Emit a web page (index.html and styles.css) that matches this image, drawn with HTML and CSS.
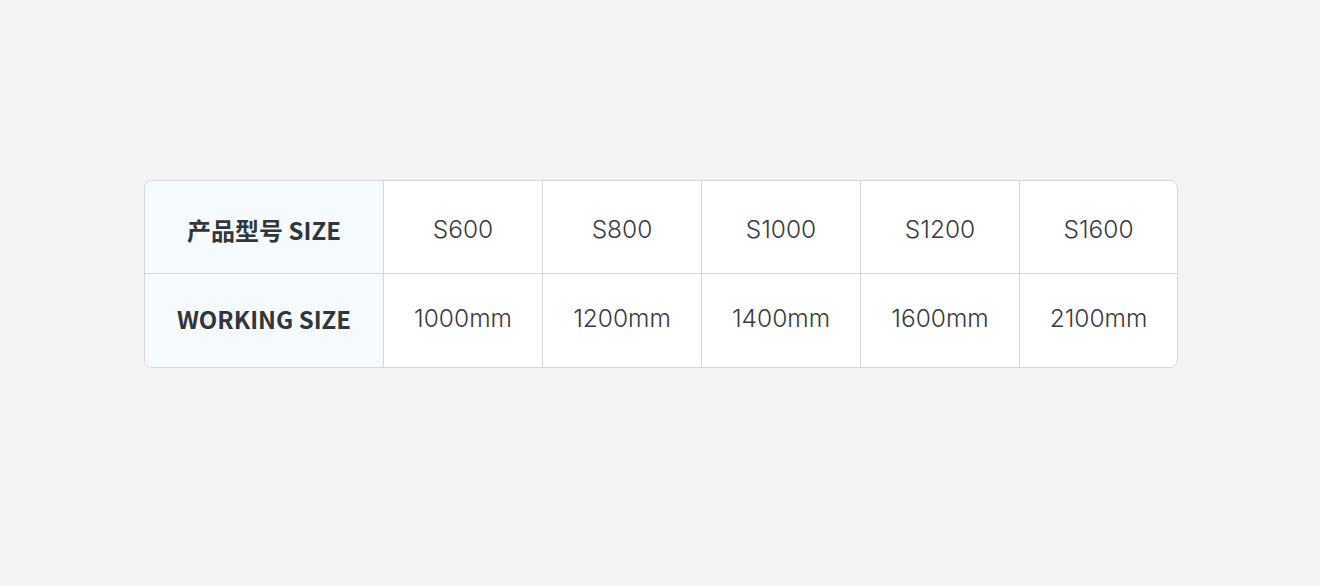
FILE: index.html
```html
<!DOCTYPE html>
<html lang="zh">
<head>
<meta charset="utf-8">
<link rel="stylesheet" href="styles.css">
</head>
<body>
<div class="page">
  <div class="spec">
    <div class="cell head top">产品型号 SIZE</div>
    <div class="cell top">S600</div>
    <div class="cell top">S800</div>
    <div class="cell top">S1000</div>
    <div class="cell top">S1200</div>
    <div class="cell top last">S1600</div>
    <div class="cell head bottom">WORKING SIZE</div>
    <div class="cell bottom">1000mm</div>
    <div class="cell bottom">1200mm</div>
    <div class="cell bottom">1400mm</div>
    <div class="cell bottom">1600mm</div>
    <div class="cell bottom last">2100mm</div>
  </div>
</div>
</body>
</html>
```
FILE: styles.css
```css
html, body {
  margin: 0;
  background: #f4f4f6;
}
.page {
  padding: 180px 0 0 144px;
}
.spec {
  display: grid;
  grid-template-columns: 239px repeat(4, 159px) 157px;
  grid-template-rows: 93px 93px;
  width: 1032px;
  border: 1px solid #d6d6d8;
  border-radius: 8px;
  overflow: hidden;
  background: #ffffff;
}
.cell {
  display: flex;
  align-items: center;
  justify-content: center;
  border-right: 1px solid #d6d6d8;
  border-bottom: 1px solid #d6d6d8;
  font-family: Inter, "Noto Sans", sans-serif;
  font-weight: 300;
  font-size: 24.5px;
  color: #3a3a3c;
  box-sizing: border-box;
}
.cell.top { padding-top: 4px; }
.cell.last { border-right: none; }
.cell.bottom { border-bottom: none; padding-bottom: 5px; }
.cell.head {
  background: #f5fafd;
  font-family: "Noto Sans CJK SC", sans-serif;
  font-weight: 700;
  font-size: 24px;
  color: #333538;
}
```
